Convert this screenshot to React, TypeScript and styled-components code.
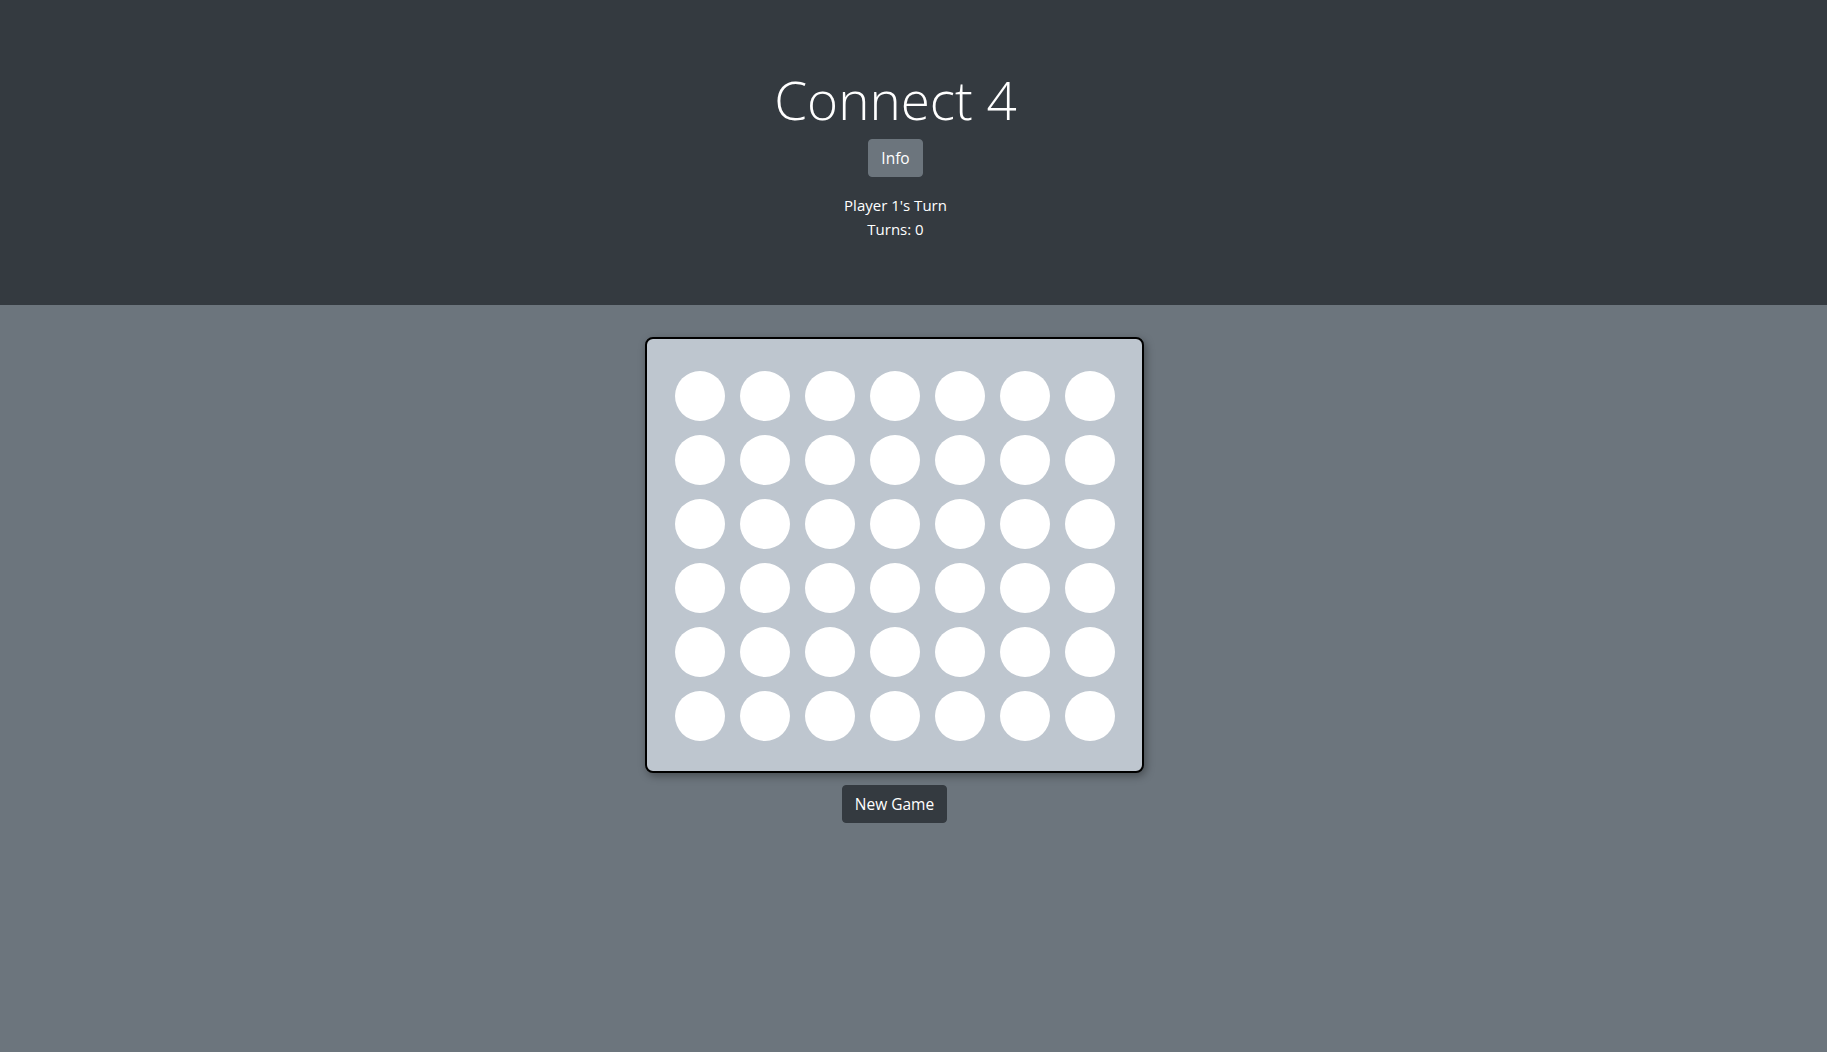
import React from 'react';
import styled, { createGlobalStyle } from 'styled-components';

const GlobalStyle = createGlobalStyle`
    html, body {
        margin: 0;
        padding: 0;
        background-color: #6c757d;
        font-family: "Open Sans", "Liberation Sans", sans-serif;
        font-size: 16px;
        line-height: 1.5;
    }
`;

const Page = styled.div`
    display: flex;
    flex-direction: column;
    min-height: 1052px;
    background-color: #6c757d;
`;

const Header = styled.header`
    display: flex;
    flex-direction: column;
    align-items: center;
    height: 305px;
    box-sizing: border-box;
    padding-top: 68px;
    padding-right: 36px;
    background-color: #343a40;
    color: #ffffff;
`;

const Title = styled.h1`
    margin: 0 0 7px 0;
    font-size: 53px;
    font-weight: 300;
    line-height: 1.2;
`;

const Button = styled.button<{ $variant: 'secondary' | 'dark' }>`
    padding: 6px 12px;
    border: 1px solid ${p => (p.$variant === 'dark' ? '#343a40' : '#6c757d')};
    border-radius: 4px;
    background-color: ${p => (p.$variant === 'dark' ? '#343a40' : '#6c757d')};
    color: #ffffff;
    font-family: inherit;
    font-size: 15.5px;
    line-height: 24px;
    cursor: pointer;
`;

const Status = styled.div`
    margin-top: 16px;
    text-align: center;
    font-size: 15px;
    line-height: 24px;
`;

const Main = styled.main`
    display: flex;
    flex-direction: column;
    align-items: center;
    padding-top: 32px;
    padding-right: 38px;
`;

const Board = styled.div`
    display: grid;
    grid-template-columns: repeat(7, 50px);
    grid-auto-rows: 50px;
    column-gap: 15px;
    row-gap: 14px;
    width: 499px;
    box-sizing: border-box;
    padding: 32px 27px 30px 28px;
    border: 2px solid #000000;
    border-radius: 8px;
    background-color: #bec6cf;
    box-shadow: 2px 3px 8px rgba(0, 0, 0, 0.35);
`;

const Cell = styled.div<{ $player: number }>`
    border-radius: 50%;
    background-color: ${p => (p.$player === 1 ? '#dc3545' : p.$player === 2 ? '#ffc107' : '#ffffff')};
`;

const Footer = styled.div`
    margin-top: 12px;
`;

const ROWS = 6;
const COLS = 7;

export default function App() {
    const board: number[][] = Array.from({ length: ROWS }, () => Array(COLS).fill(0));
    return (
        <Page>
            <GlobalStyle />
            <Header>
                <Title>Connect 4</Title>
                <Button $variant="secondary">Info</Button>
                <Status>
                    <div>Player 1's Turn</div>
                    <div>Turns: 0</div>
                </Status>
            </Header>
            <Main>
                <Board>
                    {board.map((row, r) =>
                        row.map((cell, c) => <Cell key={`${r}-${c}`} $player={cell} />)
                    )}
                </Board>
                <Footer>
                    <Button $variant="dark">New Game</Button>
                </Footer>
            </Main>
        </Page>
    );
}
